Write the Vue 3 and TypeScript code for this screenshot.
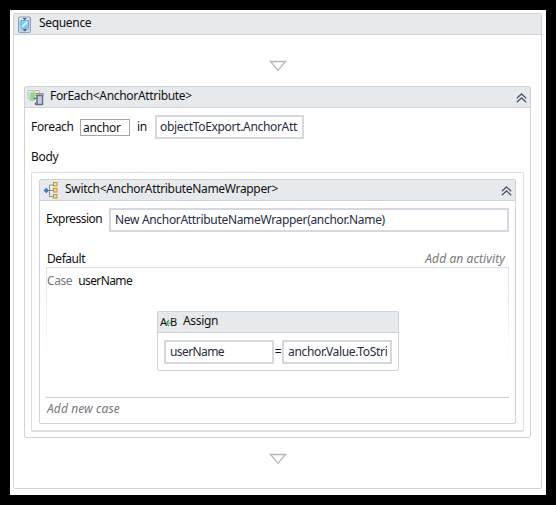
<script setup lang="ts">
import { ref } from 'vue'

const item = ref<string>('anchor')
const collection = ref<string>('objectToExport.AnchorAttributes')
const expression = ref<string>('New AnchorAttributeNameWrapper(anchor.Name)')
const assignTo = ref<string>('userName')
const assignValue = ref<string>('anchor.Value.ToString')
</script>

<template>
  <main class="frame">
    <section class="panel sequence">
      <header class="head">
        <svg class="icon seq-icon" width="15" height="18" viewBox="0 0 15 18">
          <rect x="1.500" y="1" width="12" height="15.500" rx="1" fill="#c3d3e4" stroke="#8d9eb5" />
          <rect x="2.500" y="1.800" width="9.500" height="2.500" fill="#e3ebf4" />
          <rect x="4" y="4.500" width="7.500" height="7.500" fill="#7fd0f2" stroke="#5f9fce" stroke-width=".8" />
          <path d="M5 11 10.500 5.500" stroke="#c6effc" stroke-width="2" />
          <path d="M5.500 2h4.500L7.700 4.300zM5.300 13h5L7.800 15.600z" fill="#3565a8" />
        </svg>
        <span class="title">Sequence</span>
      </header>
      <div class="sequence-body">
        <svg class="drop" width="18" height="12" viewBox="0 0 18 12">
          <path d="M1.500 1.500h15L9 10.300z" fill="#fff" stroke="#b3b5bd" stroke-width="1.300" />
        </svg>

        <section class="panel foreach">
          <header class="head">
            <svg class="icon foreach-icon" width="18" height="18" viewBox="0 0 18 18">
              <rect x="1" y="1.500" width="5" height="8.500" rx="1" fill="#e6f1ea" stroke="#a9c4bd" />
              <rect x="7" y="1.500" width="5.500" height="5" rx="1" fill="#f8e6ad" stroke="#cdb987" />
              <rect x="3" y="3.500" width="5" height="8" rx="1" fill="#8fdb8d" stroke="#b3d6bc" />
              <rect x="10" y="6.500" width="5.500" height="9" fill="#c9cfdb" stroke="#66708a" stroke-width="1.500" />
              <path d="M8.500 4.800h7.500v2" fill="none" stroke="#8d96a8" stroke-width="1.400" />
              <path d="M6.500 9.300h4M8.500 13.500v2h2" fill="none" stroke="#66708a" stroke-width="1.200" />
            </svg>
            <span class="title">ForEach&lt;AnchorAttribute&gt;</span>
            <svg class="chevron" width="11" height="10" viewBox="0 0 11 10">
              <path d="M.8 5.200 5.500.9l4.700 4.300M.8 9.200l4.700-4.300 4.700 4.300" />
            </svg>
          </header>
          <div class="foreach-body">
            <div class="loop-row">
              <span class="t-label">Foreach</span>
              <span class="item-box"><span>{{ item }}</span></span>
              <span class="t-in">in</span>
              <span class="box collection"><span class="clip">{{ collection }}</span></span>
            </div>
            <div class="body-label">Body</div>
            <div class="body-zone">
              <section class="panel switch">
                <header class="head">
                  <svg class="icon switch-icon" width="16" height="18" viewBox="0 0 16 18">
                    <path d="M3 9.500h8M11 4H6.500v11.500H11" fill="none" stroke="#8a8f99" />
                    <path d="M3.300 6.700 6 9.500l-2.700 2.800L.6 9.500z" fill="#4775c5" />
                    <g fill="#f9dd86" stroke="#c0943f">
                      <rect x="10.500" y="1.500" width="3.500" height="3.500" />
                      <rect x="10.500" y="7.500" width="3.500" height="3.500" />
                      <rect x="10.500" y="13.500" width="3.500" height="3.500" />
                    </g>
                  </svg>
                  <span class="title t-switch">Switch&lt;AnchorAttributeNameWrapper&gt;</span>
                  <svg class="chevron" width="11" height="10" viewBox="0 0 11 10">
                    <path d="M.8 5.200 5.500.9l4.700 4.300M.8 9.200l4.700-4.300 4.700 4.300" />
                  </svg>
                </header>
                <div class="switch-body">
                  <div class="expr-row">
                    <span class="t-expr">Expression</span>
                    <span class="box expression"><span class="clip">{{ expression }}</span></span>
                  </div>
                  <div class="default-row">
                    <span class="t-default">Default</span>
                    <span class="hint">Add an activity</span>
                  </div>
                  <div class="case-zone">
                    <div class="case-row">
                      <span class="case-word">Case</span>
                      <span class="t-user">userName</span>
                    </div>
                    <section class="panel assign">
                      <header class="head">
                        <span class="ab"><span>A</span><svg width="6" height="8" viewBox="0 0 6 8"><path d="M0 4h6M3 1 .5 4 3 7" fill="none" stroke="#43a968" stroke-width="1.200" /></svg><span>B</span></span>
                        <span class="title">Assign</span>
                      </header>
                      <div class="assign-body">
                        <span class="box operand"><span class="clip t-user">{{ assignTo }}</span></span>
                        <span class="equals">=</span>
                        <span class="box operand value"><span class="clip">{{ assignValue }}</span></span>
                      </div>
                    </section>
                  </div>
                  <div class="new-case hint">Add new case</div>
                </div>
              </section>
            </div>
          </div>
        </section>

        <svg class="drop last" width="18" height="12" viewBox="0 0 18 12">
          <path d="M1.500 1.500h15L9 10.300z" fill="#fff" stroke="#b3b5bd" stroke-width="1.300" />
        </svg>
      </div>
    </section>
  </main>
</template>

<style>
body {
  margin: 0;
  background: #000;
}
</style>

<style scoped>
* {
  box-sizing: border-box;
}
.frame {
  width: 556px;
  height: 505px;
  padding: 3px 4px 6px 3px;
  border: 10px solid #000;
  background: #fff;
  font: 12px/18px "Noto Sans", "Open Sans", sans-serif;
  letter-spacing: -0.32px;
  color: #111;
  white-space: nowrap;
}
.panel {
  border: 1px solid #d0d3db;
  border-radius: 2px;
  background: #fff;
}
.sequence {
  height: 476px;
}
.head {
  display: flex;
  align-items: flex-start;
  height: 21px;
  background: #e7eaed;
  border-bottom: 1px solid #d0d3db;
}
.icon {
  flex: none;
}
.seq-icon {
  margin: 2px 7px 0 3px;
}
.foreach-icon {
  margin: 2px 5px 0 2px;
}
.switch-icon {
  margin: 1px 6px 0 3px;
}
.chevron {
  margin: 6px 3px 0 auto;
  fill: none;
  stroke: #50546a;
  stroke-width: 1.3;
}
.sequence-body {
  display: flex;
  flex-direction: column;
  padding: 25px 10px 0;
}
.drop {
  align-self: center;
  margin-bottom: 14px;
}
.drop.last {
  margin: 15px 0 0;
}
.foreach {
  height: 352px;
}
.foreach-body {
  padding: 7px 6px 0;
}
.loop-row {
  display: flex;
  height: 24px;
}
.t-label {
  width: 49px;
  padding-top: 3px;
}
.item-box {
  width: 50px;
  height: 17px;
  margin-top: 4px;
  padding-left: 2px;
  border: 1px solid #a5a7ae;
  line-height: 16px;
}
.t-in {
  width: 25px;
  padding: 3px 0 0 7px;
}
.box {
  display: block;
  height: 24px;
  padding: 0 5px 0 4px;
  border: 2px solid #d5d8e1;
  background: #fff;
  color: #272c43;
  line-height: 19px;
}
.clip {
  display: block;
  overflow: hidden;
}
.collection {
  width: 149px;
  padding: 0 4px 0 3px;
}
.body-label {
  height: 33px;
  padding-top: 9px;
}
.body-zone {
  height: 260px;
  padding: 6px 7px;
  border: 1px solid #dedfe3;
  border-bottom-width: 2px;
  border-radius: 2px;
}
.switch {
  height: 245px;
}
.switch-body {
  padding: 7px 6px 0;
}
.expr-row {
  display: flex;
}
.t-expr {
  width: 63px;
  padding-top: 2px;
  letter-spacing: -0.5px;
}
.expression {
  width: 400px;
}
.default-row {
  display: flex;
  justify-content: space-between;
  height: 35px;
  padding: 18px 4px 0 1px;
}
.t-default {
  letter-spacing: -0.45px;
}
.hint {
  color: #77787c;
  font-style: italic;
  letter-spacing: 0.1px;
}
.case-zone {
  width: 463px;
  height: 131px;
  padding-top: 4px;
  border: 1px solid;
  border-image: linear-gradient(#dfe1e5, #fff 75%, #fff 98%, #ced0d5 99%) 1;
}
.case-row {
  display: flex;
  gap: 6px;
  height: 39px;
}
.case-word {
  color: #77797e;
  letter-spacing: -0.4px;
}
.t-user {
  letter-spacing: -0.6px;
}
.assign {
  width: 242px;
  height: 60px;
  margin-left: 110px;
}
.ab {
  display: flex;
  align-items: center;
  width: 20px;
  height: 20px;
  margin: 0 3px 0 2px;
  font-size: 11px;
  letter-spacing: 0;
}
.ab svg {
  flex: none;
  margin: 1px -1.5px 0;
}
.assign-body {
  display: flex;
  padding: 7px 6px;
}
.operand {
  width: 110px;
}
.value {
  padding-right: 3px;
}
.equals {
  width: 8px;
  padding-top: 3px;
  text-align: center;
}
.new-case {
  padding: 2px 0 0 1px;
}
</style>
